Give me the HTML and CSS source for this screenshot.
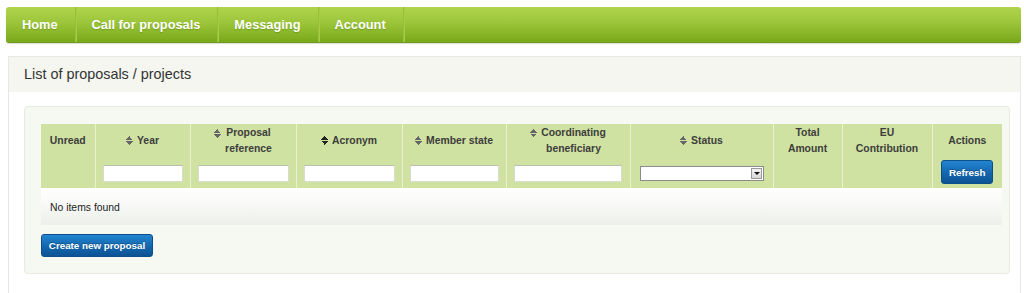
FILE: index.html
```html
<!DOCTYPE html>
<html lang="en">
<head>
    <meta charset="UTF-8">
    <title>List of proposals / projects</title>
    <link rel="stylesheet" href="styles.css">
</head>
<body>

<div class="topnav">
    <a href="#" class="nav-item">Home</a>
    <a href="#" class="nav-item">Call for proposals</a>
    <a href="#" class="nav-item">Messaging</a>
    <a href="#" class="nav-item">Account</a>
</div>

<div class="panel">
    <div class="panel-header">List of proposals / projects</div>
    <div class="panel-body">
        <div class="box">
            <table class="grid">
                <colgroup>
                    <col class="c-unread">
                    <col class="c-year">
                    <col class="c-ref">
                    <col class="c-acr">
                    <col class="c-ms">
                    <col class="c-coord">
                    <col class="c-status">
                    <col class="c-total">
                    <col class="c-eu">
                    <col class="c-actions">
                </colgroup>
                <thead>
                <tr>
                    <th><div class="th-title">Unread</div></th>
                    <th>
                        <div class="th-title"><span class="sort"></span>Year</div>
                        <input type="text" class="filter f-year">
                    </th>
                    <th>
                        <div class="th-title"><span class="sort top"></span>Proposal<br>reference</div>
                        <input type="text" class="filter f-ref">
                    </th>
                    <th>
                        <div class="th-title"><span class="sort active"></span>Acronym</div>
                        <input type="text" class="filter f-acr">
                    </th>
                    <th>
                        <div class="th-title"><span class="sort"></span>Member state</div>
                        <input type="text" class="filter f-ms">
                    </th>
                    <th>
                        <div class="th-title"><span class="sort top"></span>Coordinating<br>beneficiary</div>
                        <input type="text" class="filter f-coord">
                    </th>
                    <th>
                        <div class="th-title"><span class="sort"></span>Status</div>
                        <div class="select"><span class="select-btn"></span></div>
                    </th>
                    <th><div class="th-title">Total<br>Amount</div></th>
                    <th><div class="th-title">EU<br>Contribution</div></th>
                    <th>
                        <div class="th-title">Actions</div>
                        <button class="btn btn-small">Refresh</button>
                    </th>
                </tr>
                </thead>
                <tbody>
                <tr class="empty">
                    <td colspan="10">No items found</td>
                </tr>
                </tbody>
            </table>
            <button class="btn btn-create">Create new proposal</button>
        </div>
    </div>
</div>

</body>
</html>
```

FILE: styles.css
```css
body {
    font-family: "Liberation Sans", Arial, sans-serif;
    background-color: #fff;
    margin: 0;
    padding: 7px 3px 0 6px;
    color: #333;
}
.topnav {
    display: flex;
    height: 36px;
    background: linear-gradient(to bottom, #b0d44c 0%, #9cc53a 45%, #78a91b 100%);
    border-radius: 3px;
    border-bottom: 1px solid #6f9d16;
    box-sizing: border-box;
    box-shadow: 0 1px 1px rgba(0, 0, 0, 0.15);
}
.nav-item {
    display: flex;
    align-items: center;
    padding: 0 17px 0 16px;
    color: #fff;
    font-weight: bold;
    font-size: 12.8px;
    text-decoration: none;
    text-shadow: 0 1px 1px rgba(60, 90, 0, 0.3);
    border-right: 1px solid #97c038;
    box-shadow: 1px 0 0 #a6cb45;
}
.panel {
    margin: 13px 0 0 2px;
    border: 1px solid #e6e9e1;
    border-bottom: none;
    height: 250px;
}
.panel-header {
    background-color: #f4f6ef;
    font-size: 14.4px;
    padding: 9px 15px 10px;
    height: 16px;
    line-height: 16px;
    color: #333;
}
.panel-body {
    padding: 14px 10px 0 15px;
}
.box {
    background-color: #f6f8f2;
    border: 1px solid #e8ebe2;
    border-radius: 4px;
    padding: 17px 8px 16px 16px;
}
.grid {
    width: 961px;
    border-collapse: collapse;
    table-layout: fixed;
}
.c-unread { width: 54px; }
.c-year { width: 95px; }
.c-ref { width: 106px; }
.c-acr { width: 106px; }
.c-ms { width: 104px; }
.c-coord { width: 124px; }
.c-status { width: 143px; }
.c-total { width: 69px; }
.c-eu { width: 90px; }
.c-actions { width: 70px; }
.grid th {
    background-color: #cfe2a1;
    border-left: 1px solid #e8f1d2;
    font-size: 10.4px;
    font-weight: bold;
    color: #3d3d3d;
    height: 64px;
    padding: 0;
    vertical-align: top;
    text-align: center;
}
.grid th:first-child {
    border-left: none;
}
.th-title {
    height: 32px;
    padding-top: 1px;
    box-sizing: border-box;
    display: flex;
    align-items: center;
    justify-content: center;
    line-height: 16px;
}
.sort {
    display: inline-block;
    flex: none;
    width: 7px;
    height: 9px;
    margin-right: 4px;
    background:
        linear-gradient(to bottom right, transparent 50%, #666 50%) 0 0 / 4px 4px no-repeat,
        linear-gradient(to bottom left, transparent 50%, #666 50%) 3px 0 / 4px 4px no-repeat,
        linear-gradient(to top right, transparent 50%, #666 50%) 0 5px / 4px 4px no-repeat,
        linear-gradient(to top left, transparent 50%, #666 50%) 3px 5px / 4px 4px no-repeat;
}
.sort.active {
    background:
        linear-gradient(to bottom right, transparent 50%, #222 50%) 0 0 / 4px 4px no-repeat,
        linear-gradient(to bottom left, transparent 50%, #222 50%) 3px 0 / 4px 4px no-repeat,
        linear-gradient(to top right, transparent 50%, #222 50%) 0 5px / 4px 4px no-repeat,
        linear-gradient(to top left, transparent 50%, #222 50%) 3px 5px / 4px 4px no-repeat;
}
.sort.top {
    align-self: flex-start;
    margin-top: 4px;
}
.filter {
    display: block;
    box-sizing: border-box;
    height: 17px;
    margin: 9px auto 0;
    border: 1px solid #d8dccf;
    border-top-color: #b9beb0;
    background: #fff;
    padding: 0 2px;
    font-size: 11px;
}
.f-year { width: 80px; }
.f-ref { width: 91px; }
.f-acr { width: 91px; }
.f-ms { width: 89px; }
.f-coord { width: 108px; }
.select {
    width: 124px;
    height: 15px;
    margin: 10px 0 0 9px;
    border: 1px solid #8c8c8c;
    background: #fff;
    position: relative;
    box-sizing: border-box;
}
.select-btn {
    position: absolute;
    right: 1px;
    top: 1px;
    width: 11px;
    height: 11px;
    background: linear-gradient(to bottom, #f4f4f4, #d8d8d8);
    border: 1px solid #9a9a9a;
    box-sizing: border-box;
}
.select-btn::after {
    content: "";
    position: absolute;
    left: 2px;
    top: 3px;
    border-left: 3px solid transparent;
    border-right: 3px solid transparent;
    border-top: 3px solid #111;
}
.btn {
    font-family: "Liberation Sans", Arial, sans-serif;
    font-weight: bold;
    font-size: 9.8px;
    color: #fff;
    border: 1px solid #0c4f8a;
    border-radius: 3px;
    background: linear-gradient(to bottom, #2285d0 0%, #1466ad 55%, #0c5394 100%);
    cursor: pointer;
    text-shadow: 0 -1px 0 rgba(0, 0, 0, 0.25);
    padding: 0;
}
.btn-small {
    display: block;
    width: 52px;
    height: 24px;
    margin: 4px auto 0;
}
.grid td {
    font-size: 10.4px;
    color: #222;
    height: 37px;
    padding: 1px 0 0 9px;
    box-sizing: border-box;
    background: linear-gradient(to bottom, #ffffff 0%, #f9faf8 40%, #edefea 100%);
}
.btn-create {
    display: block;
    width: 112px;
    height: 23px;
    margin-top: 9px;
}
```
